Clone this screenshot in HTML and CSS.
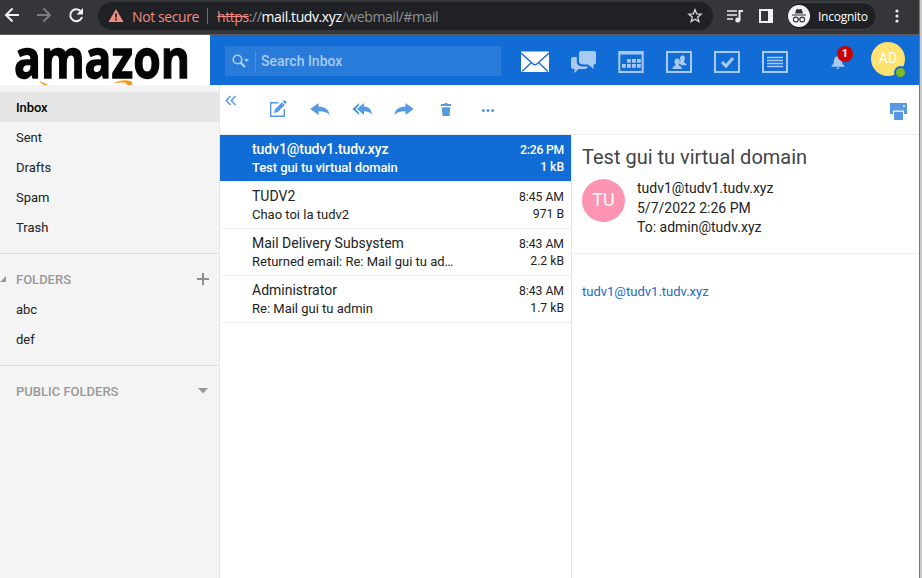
FILE: index.html
```html
<!DOCTYPE html>
<html lang="en">
<head>
<meta charset="utf-8">
<title>Webmail</title>
<link rel="stylesheet" href="styles.css">
</head>
<body>
<div class="window">
  <div class="chrome">
    <svg class="nav" width="90" height="34" viewBox="0 0 90 34" fill="none" stroke-width="2">
      <path d="M19 16H6M12.5 9.5 6 16l6.500 6.500" stroke="#f1f1f3"/>
      <path d="M37 16h13M43.500 9.500 50 16l-6.500 6.500" stroke="#7d7e82"/>
      <path d="M81 12.500A6 6 0 1 0 82 18" stroke="#f1f1f3"/>
      <path d="M83 9v6.500h-6.500z" fill="#f1f1f3"/>
    </svg>
    <div class="address">
      <svg class="warning" width="16" height="14" viewBox="0 0 16 14"><path d="M8 0 15.500 13H.5z" fill="#f28b82"/><path d="M8 4.500v4M8 9.500v2" stroke="#202124" stroke-width="1.700"/></svg>
      <span class="insecure">Not secure</span>
      <span class="divider"></span>
      <span class="url"><s>https</s><span>://</span><b>mail.tudv.xyz</b><span>/webmail/#mail</span></span>
      <svg class="star" width="16" height="16" viewBox="0 0 16 16"><path d="m8 1.700 1.700 4.200 4.500.3-3.500 2.900 1.200 4.500L8 11.200l-3.900 2.400 1.200-4.500-3.500-2.900 4.500-.3z" fill="none" stroke="#d8d9dc" stroke-width="1.300"/></svg>
    </div>
    <svg class="media" width="18" height="16" viewBox="0 0 18 16"><path d="M1 3h10M1 7h10M1 11h6" stroke="#e8eaed" stroke-width="1.600"/><path d="M13.500 12V3H17" fill="none" stroke="#e8eaed" stroke-width="2"/><circle cx="11.800" cy="12" r="2.500" fill="#e8eaed"/></svg>
    <svg class="panel" width="14" height="14" viewBox="0 0 14 14"><path d="M0 0h14v14H0zM2 2v10h7V2z" fill="#f1f1f3" fill-rule="evenodd"/></svg>
    <div class="incognito">
      <svg width="22" height="22" viewBox="0 0 22 22"><circle cx="11" cy="11" r="11" fill="#f1f3f4"/><path d="M7 8.500 8.300 4.500q.3-.8 1.100-.5l1.600.4 1.600-.4q.8-.3 1.100.5L15 8.500zM4 9.500h14v1.100H4z" fill="#303136"/><g fill="none" stroke="#303136" stroke-width="1.100"><circle cx="7.800" cy="14.500" r="2.400"/><circle cx="14.200" cy="14.500" r="2.400"/><path d="M10.200 14.300q.8-.6 1.600 0"/></g></svg>
      <span>Incognito</span>
    </div>
    <svg class="kebab" width="4" height="14" viewBox="0 0 4 14" fill="#e8eaed"><circle cx="2" cy="2" r="1.600"/><circle cx="2" cy="7" r="1.600"/><circle cx="2" cy="12" r="1.600"/></svg>
  </div>

  <header class="topbar">
    <svg class="logo" width="210" height="50" viewBox="0 0 210 50">
      <text x="14" y="42.500" textLength="176" lengthAdjust="spacingAndGlyphs" class="logo-text">amazon</text>
      <path d="M39 45.500 48 50h-4q-3-1.500-5-4.500M115 47.500q8-3.500 15.500-1.500 2.500 1 1.500 4h-5q0-2-2-2.200-5-.6-10 .5z" fill="#f79a1b"/>
    </svg>
    <div class="search">
      <svg width="18" height="14" viewBox="0 0 18 14"><circle cx="5.500" cy="5.500" r="4.300" fill="none" stroke="#b0cef2" stroke-width="1.600"/><path d="m8.500 8.500 4.500 4.500" stroke="#b0cef2" stroke-width="2.400"/><path d="M12 5h5l-2.500 3z" fill="#b0cef2"/></svg>
      <span class="search-label">Search Inbox</span>
    </div>
    <nav class="modules">
      <svg width="28" height="22" viewBox="0 0 28 22"><path d="M0 .5h28v20.500H0z" fill="#fff"/><path d="m0 2 11.500 10.500Q14 15 16.500 12.500L28 2M1 20.500l9.500-9M27 20.500l-9.500-9" fill="none" stroke="#116cd6" stroke-width="1.300"/></svg>
      <svg width="28" height="22" viewBox="0 0 28 22" fill="#a9caf3"><path d="M12 0h13q2 0 2 2v9.500q0 2-2 2h-.5V18L19 13.500h-4Q10 13 10 11V2q0-2 2-2M4 6h3.800v5.500q.5 3.500 5 4H19q-1 2.500-3 2.500H9.500L5.500 22v-4H4.500q-2.500 0-2.500-2.500V8q0-2 2-2"/></svg>
      <svg width="28" height="22" viewBox="0 0 28 22"><path d="M2.300 1h23.400v20H2.300zM2 2.500h24" fill="none" stroke="#a9caf3" stroke-width="2"/><path d="M10 8h3.800v3.800H10zM15 8h3.800v3.800H15zM20 8h3.800v3.800H20zM5 13h3.800v3.800H5zM10 13h3.800v3.800H10zM15 13h3.800v3.800H15zM20 13h3.800v3.800H20z" fill="#a9caf3"/></svg>
      <svg width="28" height="22" viewBox="0 0 28 22"><path d="M2 1h24v20H2z" fill="none" stroke="#a9caf3" stroke-width="2"/><path d="M17.500 4.500c2 0 2.600 1.500 2.300 3.500-.2 1.600-1 2.300-.9 3.300.8 1 2.600.8 2.800 3h-5.200c-.5-1-1.600-1.200-2-2q1.500-2.500.5-5c.2-1.700 1.100-2.800 2.500-2.800M12.300 7.500c2 0 2.800 1.500 2.500 3.500-.2 1.500-1.100 2.200-1 3.300 1 1 2.900.8 3 3.700H7.500c.1-2.900 2.200-2.700 3-3.700.1-1.100-.8-1.800-1-3.300-.2-2 .7-3.500 2.800-3.500" fill="#a9caf3"/></svg>
      <svg width="28" height="22" viewBox="0 0 28 22" fill="none" stroke="#a9caf3"><path d="M2 1h24v20H2z" stroke-width="2"/><path d="m9 11 4 4 7-8" stroke-width="3"/></svg>
      <svg width="28" height="22" viewBox="0 0 28 22" fill="none" stroke="#a9caf3"><path d="M2 1h24v20H2z" stroke-width="2"/><path d="M6 6.500h16M6 9.500h16M6 12.500h16M6 15.500h16" stroke-width="1.500"/></svg>
    </nav>
    <div class="bell">
      <svg width="14" height="14" viewBox="0 0 14 14"><path d="M7 0q1 0 1 1.200c2.500.8 2.900 3 2.900 5.300q0 2.500 2.600 4.500v.8H.5V11Q3 9 3 6.500c0-2.300.5-4.500 3-5.300Q6 0 7 0M5.500 12.500h3Q8 14 7 14t-1.500-1.500" fill="#a9caf3"/></svg>
      <span class="badge">1</span>
    </div>
    <div class="account">AD<i class="status"></i></div>
  </header>

  <main class="workspace">
    <aside class="sidebar">
      <ul class="folders">
        <li class="active">Inbox</li><li>Sent</li><li>Drafts</li><li>Spam</li><li>Trash</li>
      </ul>
      <section class="group">
        <h2><svg class="collapse" width="6" height="6" viewBox="0 0 6 6"><path d="M6 0v6H0z" fill="#999"/></svg>FOLDERS<svg class="group-icon" width="12" height="12" viewBox="0 0 12 12"><path d="M6 0v12M0 6h12" stroke="#8f8f8f" stroke-width="2"/></svg></h2>
        <ul class="folders"><li>abc</li><li>def</li></ul>
      </section>
      <section class="group">
        <h2>PUBLIC FOLDERS<svg class="group-icon" width="12" height="6" viewBox="0 0 12 6"><path d="M1 0h10L6 5.500z" fill="#999"/></svg></h2>
      </section>
    </aside>

    <section class="content">
      <div class="toolbar">
        <svg class="hide" width="12" height="12" viewBox="0 0 12 12"><path d="M5.500 1 1.300 5.500 5.500 10M10.500 1 6.300 5.500l4.200 4.500" fill="none" stroke="#579ae5" stroke-width="1.500"/></svg>
        <div class="actions">
          <svg width="20" height="18" viewBox="0 0 20 18"><path d="M10.500 2.700H2.700v13.600h13.600V9" fill="none" stroke="#5598e4" stroke-width="1.400"/><path d="m6 13 1-3.800 7-7 2.800 2.800-7 7zM14.700 1.500l1-1q.7-.7 1.500 0l1 1q.7.800 0 1.500l-.8 1z" fill="#5598e4"/></svg>
          <svg width="20" height="18" viewBox="0 0 20 18"><path d="M8.500 3v3.500c5.500.1 10.500 2.500 11.200 8.500q-3.700-4-11.200-3.700V15L.3 9z" fill="#5598e4"/></svg>
          <svg width="20" height="18" viewBox="0 0 20 18"><path d="m7 3-6.700 6L7 15v-2.500L3.700 9 7 5.500zM12 3v3.500c4.500.1 7.500 2.500 8 8.500q-3-4-8-3.700V15L5 9z" fill="#5598e4"/></svg>
          <svg width="20" height="18" viewBox="0 0 20 18"><path d="M11.500 3v3.500C6 6.600 1 9 .3 15Q4 11 11.500 11.300V15l8.200-6z" fill="#5598e4"/></svg>
          <svg width="20" height="18" viewBox="0 0 20 18"><path d="M5 4h3l1-1h2l1 1h3v2H5zM5.700 7.200h8.600L13.500 16h-7z" fill="#5598e4"/></svg>
          <svg width="20" height="18" viewBox="0 0 20 18" fill="#5598e4"><circle cx="5.300" cy="10.400" r="1.500"/><circle cx="10" cy="10.400" r="1.500"/><circle cx="14.700" cy="10.400" r="1.500"/></svg>
        </div>
        <svg class="print" width="18" height="18" viewBox="0 0 18 18"><path d="M0 0h17v11h-3V7.500H3V11H0zM4 8.800h9V17H4z" fill="#5598e4"/><path d="M13 3h2" stroke="#fff" stroke-width="1.500"/></svg>
      </div>
      <div class="panes">
        <div class="messages">
          <article class="message selected"><div class="from">tudv1@tudv1.tudv.xyz</div><time>2:26 PM</time><div class="subject">Test gui tu virtual domain</div><span class="size">1 kB</span></article>
          <article class="message"><div class="from">TUDV2</div><time>8:45 AM</time><div class="subject">Chao toi la tudv2</div><span class="size">971 B</span></article>
          <article class="message"><div class="from">Mail Delivery Subsystem</div><time>8:43 AM</time><div class="subject">Returned email: Re: Mail gui tu ad…</div><span class="size">2.2 kB</span></article>
          <article class="message"><div class="from">Administrator</div><time>8:43 AM</time><div class="subject">Re: Mail gui tu admin</div><span class="size">1.7 kB</span></article>
        </div>
        <article class="preview">
          <header class="mail-head">
            <h1>Test gui tu virtual domain</h1>
            <div class="sender"><span class="avatar">TU</span><div class="details"><div>tudv1@tudv1.tudv.xyz</div><div>5/7/2022 2:26 PM</div><div>To: admin@tudv.xyz</div></div></div>
          </header>
          <p class="mail-body">tudv1@tudv1.tudv.xyz</p>
        </article>
      </div>
    </section>
  </main>
</div>
</body>
</html>
```

FILE: styles.css
```css
* { box-sizing: border-box; }
body { margin: 0; height: 578px; overflow: hidden; background: #cbcbcb; font: 13px Roboto, "Liberation Sans", sans-serif; color: #222; }
svg { display: block; flex: none; }
ul, h1, h2, p { margin: 0; padding: 0; list-style: none; }
.window { width: 920px; height: 578px; border-right: 1px solid #777; display: flex; flex-direction: column; background: #fff; }

.chrome { height: 35px; flex: none; display: flex; align-items: center; padding-bottom: 2px; background: #35363a; border-bottom: 1px solid #5b5c60; font-family: "Open Sans", "Noto Sans", sans-serif; }
.nav { margin-right: 8px; }
.address { width: 615px; height: 28px; border-radius: 14px; background: #202124; display: flex; align-items: center; padding: 0 10px; font-size: 14px; flex: none; }
.insecure { color: #f28b82; width: 67px; margin-left: 8px; white-space: nowrap; letter-spacing: -.4px; }
.divider { width: 1px; height: 16px; background: #6b6c70; margin: 0 9px 0 8px; }
.url { display: flex; color: #8f9296; white-space: nowrap; letter-spacing: -.4px; }
.url s { color: #f28b82; }
.url b { color: #fff; font-weight: 400; }
.star { margin-left: auto; }
.media { margin-left: 13px; }
.panel { margin-left: 15px; }
.incognito { margin-left: 13px; width: 91px; height: 28px; border: 1px solid #424347; border-radius: 14px; background: #202124; display: flex; align-items: center; color: #fff; font-size: 12px; padding-left: 1px; flex: none; }
.incognito span { margin-left: 8px; letter-spacing: -.25px; }
.kebab { margin-left: 18px; }

.topbar { height: 50px; flex: none; background: #116cd6; display: flex; align-items: center; }
.logo { background: #fff; }
.logo-text { font: 700 54px "Open Sans", sans-serif; fill: #050505; stroke: #050505; stroke-width: 1.3px; }
.search { margin: 2px 0 0 15px; width: 276px; height: 30px; background: #297bda; display: flex; align-items: center; padding-left: 7px; color: #a9caf3; flex: none; }
.search-label { margin-left: 5px; height: 20px; line-height: 21px; border-left: 1px solid #4a90e2; padding-left: 5px; font-size: 14px; font-weight: 500; }
.modules { display: flex; gap: 20px; margin: 3px 0 0 20px; }
.bell { position: relative; margin: 4px 0 0 42px; }
.badge { position: absolute; left: 6px; top: -9px; width: 16px; height: 16px; border-radius: 50%; background: #cd0303; color: #fff; font: 700 11px/16px Roboto, sans-serif; text-align: center; }
.account { position: relative; margin: -2px 0 0 26px; width: 34px; height: 34px; border-radius: 50%; background: #ffe270; color: #fff; font-size: 14px; line-height: 33px; text-align: center; }
.status { position: absolute; left: 23px; top: 24px; width: 13px; height: 13px; border: 2px solid #116cd6; border-radius: 50%; background: #82b91e; }

.workspace { flex: 1; display: flex; min-height: 0; }
.sidebar { width: 220px; flex: none; background: #f4f4f4; border-right: 1px solid #e6e6e6; padding-top: 7px; }
.folders li { height: 30px; line-height: 31px; padding-left: 16px; }
.folders .active { background: #e6e6e6; color: #000; font-weight: 500; letter-spacing: -.1px; }
.group { border-top: 1px solid #dedede; margin-top: 11px; padding-top: 10px; }
.group h2 { position: relative; height: 30px; display: flex; align-items: center; padding: 0 10px 0 16px; font-size: 13px; font-weight: 500; color: #999; }
.collapse { position: absolute; left: 0; top: 12px; }
.group-icon { margin-left: auto; }

.content { flex: 1; display: flex; flex-direction: column; min-width: 0; }
.toolbar { height: 50px; flex: none; display: flex; align-items: center; border-bottom: 1px solid #ebebeb; }
.hide { margin: 0 0 18px 5px; }
.actions { display: flex; gap: 22px; margin: -2px 0 0 31px; }
.print { margin: 4px 11px 0 auto; }
.panes { flex: 1; display: flex; min-height: 0; }
.messages { width: 352px; flex: none; border-right: 1px solid #e6e6e6; }
.message { height: 47px; display: grid; grid-template-columns: 1fr auto; grid-template-rows: 18px 18px; padding: 6px 7px 0 32px; border-bottom: 1px solid #efefef; line-height: 18px; }
.from { font-size: 14px; margin-top: -1px; }
.message time, .size { text-align: right; font-size: 12.2px; }
.size { margin-top: -1px; }
.selected { background: #116cd6; background-clip: padding-box; color: #fff; font-weight: 500; letter-spacing: -.08px; }
.selected time { letter-spacing: -.2px; }
.preview { flex: 1; }
.mail-head { height: 119px; border-bottom: 1px solid #ebebeb; padding: 10px 10px 0; }
h1 { font-size: 20px; line-height: 24px; font-weight: 400; color: #444; }
.sender { display: flex; margin-top: 10px; }
.avatar { width: 43px; height: 43px; border-radius: 50%; background: #fc94b2; color: #fff; font-size: 18px; line-height: 42px; text-align: center; }
.details { margin-left: 12px; font-size: 14px; line-height: 19.5px; }
.mail-body { padding: 29px 10px 0; line-height: 18px; color: #2467c7; }
```
